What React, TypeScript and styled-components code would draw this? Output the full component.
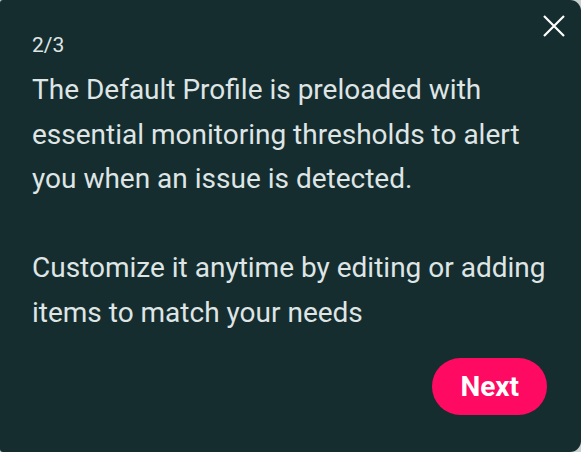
import React from "react";
import styled, { createGlobalStyle } from "styled-components";

const GlobalStyle = createGlobalStyle`
  html, body {
    margin: 0;
    padding: 0;
    background: #c9cfcf;
  }
  * { box-sizing: border-box; }
`;

const Card = styled.div`
  position: relative;
  width: 581px;
  height: 452px;
  background: #152d2f;
  border-radius: 3px 11px 11px 3px;
  padding: 30px 34px 37px 32px;
  display: flex;
  flex-direction: column;
  font-family: Roboto, "Liberation Sans", sans-serif;
  color: #dfe5e5;
`;

const CloseButton = styled.button`
  position: absolute;
  top: 14px;
  right: 15px;
  width: 24px;
  height: 24px;
  padding: 0;
  border: 0;
  background: transparent;
  cursor: pointer;
  display: flex;
  align-items: center;
  justify-content: center;
`;

const Counter = styled.div`
  font-size: 21px;
  line-height: 30px;
  margin-bottom: 8px;
`;

const Body = styled.div`
  font-size: 28px;
  line-height: 44.6px;
  flex: 1;
`;

const Paragraph = styled.p`
  margin: 0 0 44.6px 0;
  &:last-child { margin-bottom: 0; }
`;

const Footer = styled.div`
  display: flex;
  justify-content: flex-end;
`;

const NextButton = styled.button`
  height: 57px;
  padding: 0 28px;
  border: 0;
  border-radius: 29px;
  background: #ff0a63;
  color: #ffffff;
  font-family: Roboto, "Liberation Sans", sans-serif;
  font-weight: 700;
  font-size: 28px;
  cursor: pointer;
`;

export default function App() {
  return (
    <>
      <GlobalStyle />
      <Card>
        <CloseButton aria-label="Close">
          <svg width="24" height="24" viewBox="0 0 24 24">
            <path d="M2 2 L22 22 M22 2 L2 22" stroke="#ffffff" strokeWidth="2.2" strokeLinecap="butt" />
          </svg>
        </CloseButton>
        <Counter>2/3</Counter>
        <Body>
          <Paragraph>
            The Default Profile is preloaded with essential monitoring thresholds to alert you when an issue is detected.
          </Paragraph>
          <Paragraph>Customize it anytime by editing or adding items to match your needs</Paragraph>
        </Body>
        <Footer>
          <NextButton>Next</NextButton>
        </Footer>
      </Card>
    </>
  );
}
